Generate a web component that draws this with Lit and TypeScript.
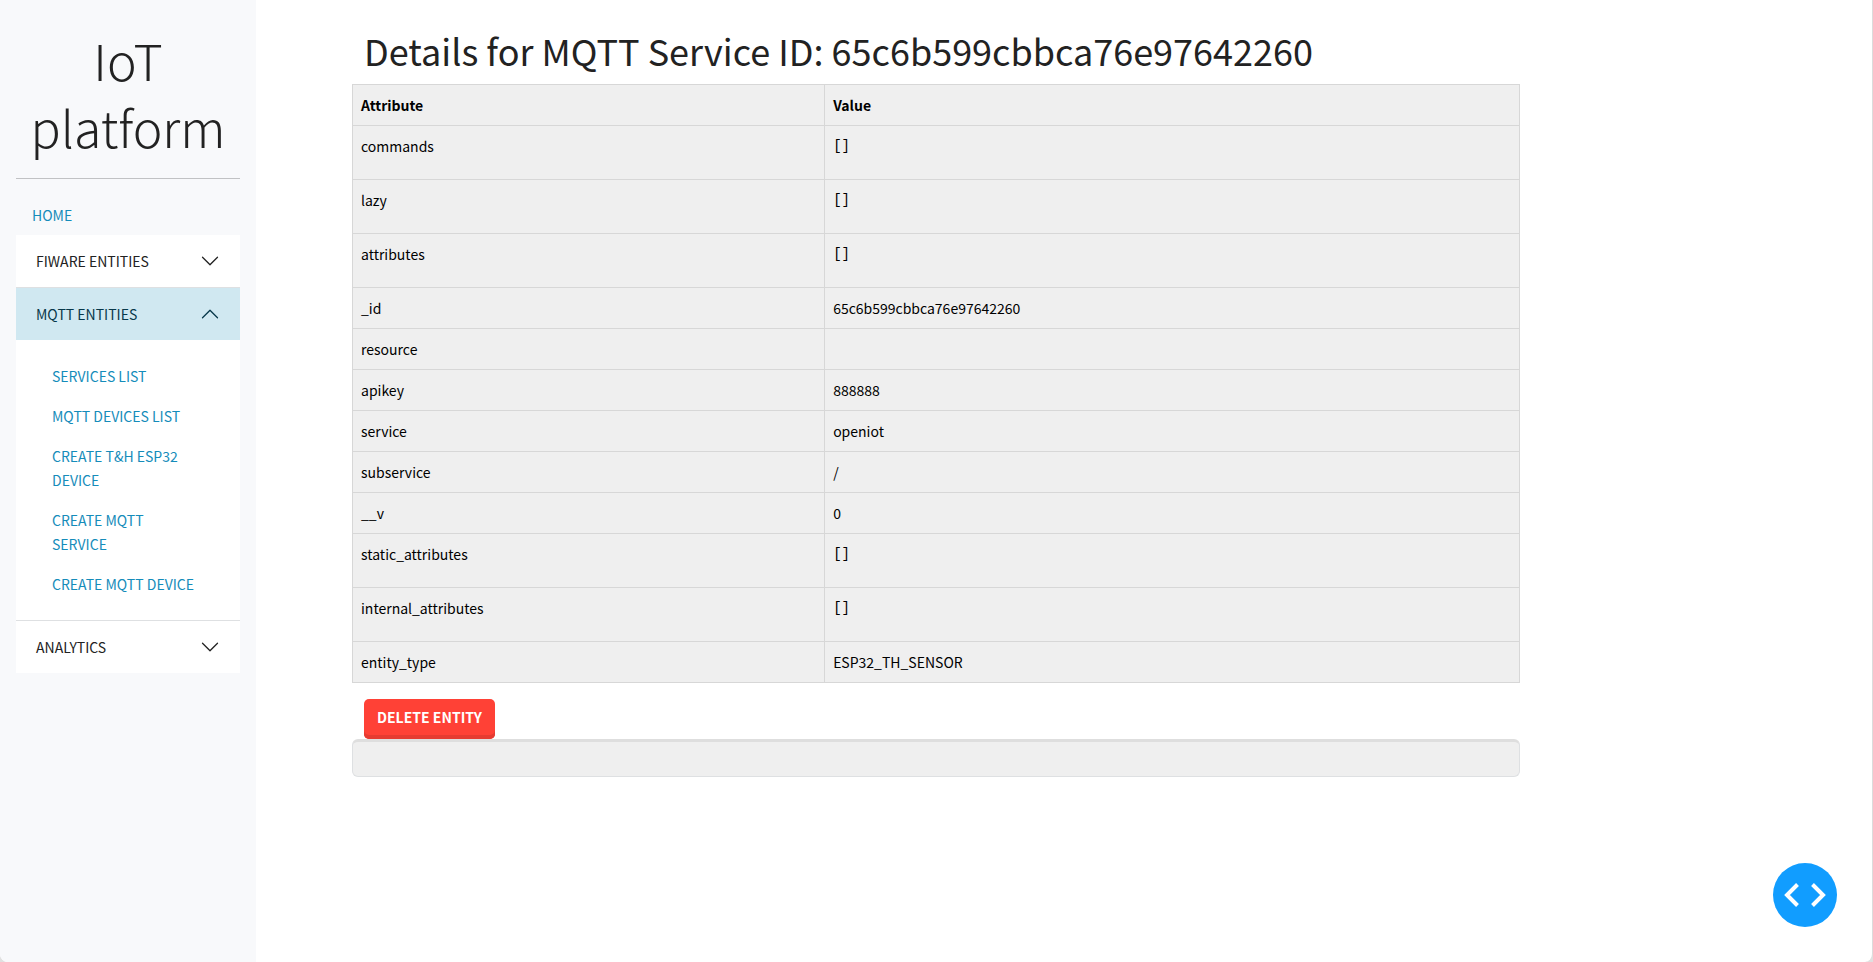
import { LitElement, html, css, svg, nothing } from "lit";
import { customElement, property, state } from "lit/decorators.js";

interface NavLink {
  label: string;
}

interface NavGroup {
  id: string;
  label: string;
  links: NavLink[];
}

interface AttributeRow {
  name: string;
  value: string;
  json?: boolean;
}

const GROUPS: NavGroup[] = [
  { id: "fiware", label: "FIWARE ENTITIES", links: [] },
  {
    id: "mqtt",
    label: "MQTT ENTITIES",
    links: [
      { label: "SERVICES LIST" },
      { label: "MQTT DEVICES LIST" },
      { label: "CREATE T&H ESP32 DEVICE" },
      { label: "CREATE MQTT SERVICE" },
      { label: "CREATE MQTT DEVICE" },
    ],
  },
  { id: "analytics", label: "ANALYTICS", links: [] },
];

const SERVICE_ID = "65c6b599cbbca76e97642260";

const ROWS: AttributeRow[] = [
  { name: "commands", value: "[]", json: true },
  { name: "lazy", value: "[]", json: true },
  { name: "attributes", value: "[]", json: true },
  { name: "_id", value: SERVICE_ID },
  { name: "resource", value: "" },
  { name: "apikey", value: "888888" },
  { name: "service", value: "openiot" },
  { name: "subservice", value: "/" },
  { name: "__v", value: "0" },
  { name: "static_attributes", value: "[]", json: true },
  { name: "internal_attributes", value: "[]", json: true },
  { name: "entity_type", value: "ESP32_TH_SENSOR" },
];

@customElement("side-nav")
export class SideNav extends LitElement {
  @state() private openId = "mqtt";

  static styles = css`
    :host {
      display: block;
      box-sizing: border-box;
      padding: 26px 16px;
      background: #f8f9fb;
    }
    .title {
      margin: 0;
      font-size: 50px;
      font-weight: 300;
      line-height: 67px;
      text-align: center;
      color: #222;
    }
    .rule {
      margin: 18px 0 16px;
      border: 0;
      border-top: 1px solid #c1c2c4;
    }
    a {
      color: #158cba;
      text-decoration: none;
      line-height: 24px;
    }
    .home {
      display: block;
      padding: 8px 16px;
    }
    .group {
      background: #fff;
    }
    .group + .group {
      border-top: 1px solid #dee0e2;
    }
    .heading {
      margin: 0;
      font: inherit;
    }
    .toggle {
      display: flex;
      align-items: center;
      justify-content: space-between;
      width: 100%;
      padding: 16px 20px;
      border: 0;
      background: transparent;
      color: #222;
      font: inherit;
      line-height: 20px;
      text-align: left;
      cursor: pointer;
    }
    .toggle[aria-expanded="true"] {
      background: #d0e8f1;
      color: #08384a;
    }
    .toggle[aria-expanded="true"] .chevron {
      transform: rotate(180deg);
    }
    .chevron {
      width: 20px;
      height: 20px;
    }
    .links {
      margin: 0;
      padding: 16px 24px 16px 20px;
      list-style: none;
    }
    .links a {
      display: block;
      padding: 8px 16px;
    }
  `;

  private toggle(id: string) {
    this.openId = this.openId === id ? "" : id;
  }

  private chevron() {
    return html`<svg class="chevron" viewBox="0 0 16 16" fill="currentColor" aria-hidden="true">
      ${svg`<path fill-rule="evenodd" d="M1.646 4.646a.5.5 0 0 1 .708 0L8 10.293l5.646-5.647a.5.5 0 0 1 .708.708l-6 6a.5.5 0 0 1-.708 0l-6-6a.5.5 0 0 1 0-.708z"/>`}
    </svg>`;
  }

  render() {
    return html`
      <h1 class="title">IoT platform</h1>
      <hr class="rule" />
      <nav>
        <a class="home" href="#home">HOME</a>
        ${GROUPS.map((group) => {
          const open = this.openId === group.id;
          return html`<section class="group">
            <h2 class="heading">
              <button
                class="toggle"
                type="button"
                aria-expanded=${open ? "true" : "false"}
                @click=${() => this.toggle(group.id)}
              >
                <span>${group.label}</span>${this.chevron()}
              </button>
            </h2>
            ${open && group.links.length
              ? html`<ul class="links">
                  ${group.links.map((link) => html`<li><a href="#${group.id}">${link.label}</a></li>`)}
                </ul>`
              : nothing}
          </section>`;
        })}
      </nav>
    `;
  }
}

@customElement("attribute-table")
export class AttributeTable extends LitElement {
  @property({ attribute: false }) rows: AttributeRow[] = [];

  static styles = css`
    :host {
      display: block;
    }
    .table {
      width: 100%;
      border-collapse: collapse;
      table-layout: fixed;
      background: #efefef;
      color: #000;
      line-height: 24px;
    }
    .name {
      width: 39%;
    }
    th,
    td {
      height: 24px;
      padding: 8px;
      border: 1px solid #d7d7d7;
      text-align: left;
      vertical-align: top;
    }
    .json {
      margin: 0 0 13px;
      font-family: "Liberation Mono", monospace;
      font-size: 14px;
      line-height: 24px;
    }
  `;

  render() {
    return html`<table class="table">
      <thead>
        <tr>
          <th class="name" scope="col">Attribute</th>
          <th scope="col">Value</th>
        </tr>
      </thead>
      <tbody>
        ${this.rows.map(
          (row) => html`<tr>
            <td>${row.name}</td>
            <td>${row.json ? html`<pre class="json">${row.value}</pre>` : row.value}</td>
          </tr>`
        )}
      </tbody>
    </table>`;
  }
}

@customElement("app-root")
export class AppRoot extends LitElement {
  static styles = css`
    :host {
      display: block;
      background: #e0e0e0;
      font-family: "Noto Sans CJK SC", "Noto Sans", sans-serif;
      font-size: 14px;
      line-height: 24px;
      color: #222;
    }
    .window {
      display: grid;
      grid-template-columns: 256px minmax(0, 1fr);
      box-sizing: border-box;
      min-height: 100vh;
      border-right: 1px solid #dcdcdc;
      border-radius: 0 0 8px 8px;
      overflow: hidden;
      background: #fff;
    }
    .main {
      padding: 26px 96px;
    }
    .content {
      max-width: 1168px;
    }
    .page-title {
      margin: 0 0 10px;
      padding: 0 12px;
      font-size: 36px;
      font-weight: 400;
      line-height: 48px;
    }
    .actions {
      display: flex;
      padding: 16px 12px 0;
    }
    .delete {
      padding: 6px 13px 10px;
      border: 0;
      border-radius: 5px;
      background: #ff4136;
      box-shadow: inset 0 -4px 0 #e63b31;
      color: #fff;
      font: inherit;
      font-weight: 700;
      cursor: pointer;
    }
    .card-footer {
      box-sizing: border-box;
      height: 38px;
      border: 1px solid #dee0e2;
      border-top: 3px solid #dedede;
      border-radius: 6px;
      background: #efefef;
    }
    .devtools {
      position: fixed;
      right: 36px;
      bottom: 35px;
      width: 64px;
      height: 64px;
      padding: 0;
      border: 0;
      border-radius: 50%;
      background: #119dff;
      cursor: pointer;
    }
    .devtools-icon {
      display: block;
      width: 64px;
      height: 64px;
    }
  `;

  render() {
    return html`
      <div class="window">
        <side-nav></side-nav>
        <main class="main">
          <div class="content">
            <h2 class="page-title">Details for MQTT Service ID: ${SERVICE_ID}</h2>
            <attribute-table .rows=${ROWS}></attribute-table>
            <div class="actions">
              <button class="delete" type="button">DELETE ENTITY</button>
            </div>
            <div class="card-footer"></div>
          </div>
        </main>
      </div>
      <button class="devtools" type="button" aria-label="Developer tools">
        <svg class="devtools-icon" viewBox="0 0 64 64" fill="none" stroke="#fff" stroke-width="4" aria-hidden="true">
          <path d="M24.5 21.500 14 32l10.500 10.500M39.500 21.500 50 32 39.500 42.500" />
        </svg>
      </button>
    `;
  }
}
